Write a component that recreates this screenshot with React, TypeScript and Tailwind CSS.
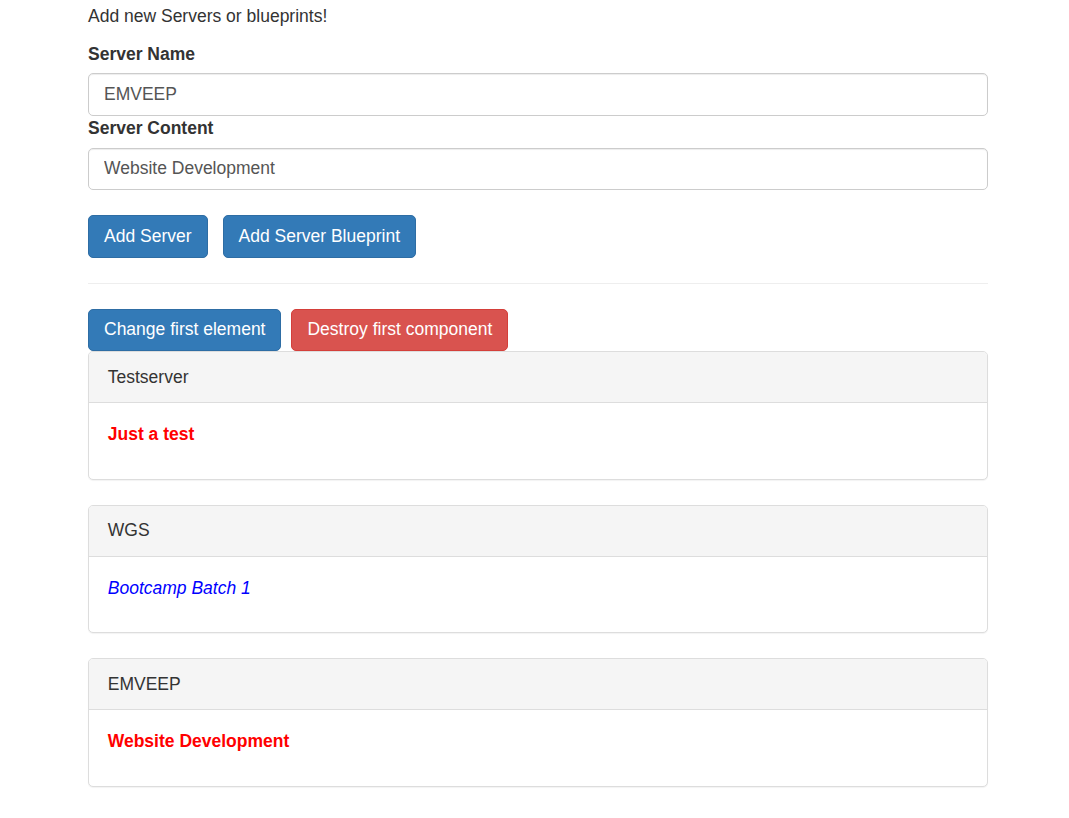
import React from 'react';

type Server = { name: string; content: string; kind: 'server' | 'blueprint' };

const servers: Server[] = [
  { name: 'Testserver', content: 'Just a test', kind: 'server' },
  { name: 'WGS', content: 'Bootcamp Batch 1', kind: 'blueprint' },
  { name: 'EMVEEP', content: 'Website Development', kind: 'server' },
];

const btnBase =
  'inline-block h-[42.5px] px-[15px] rounded-[5px] border text-[17.5px] leading-[25px] text-white';

const inputCls =
  'block w-full h-[42.5px] px-[15px] rounded-[5px] border border-[#ccc] text-[#555] shadow-[inset_0_1px_1px_rgba(0,0,0,0.075)] outline-none';

const ServerPanel: React.FC<{ server: Server }> = ({ server }) => (
  <div className="mb-[25px] rounded-[5px] border border-[#ddd] bg-white shadow-[0_1px_1px_rgba(0,0,0,0.05)]">
    <div className="px-[18.75px] py-[12.5px] bg-[#f5f5f5] border-b border-[#ddd] rounded-t-[4px] text-[#333]">
      {server.name}
    </div>
    <div className="px-[18.75px] py-[19px]">
      {server.kind === 'server' ? (
        <p className="mb-[12.5px] font-bold text-[#ff0000]">{server.content}</p>
      ) : (
        <p className="mb-[12.5px] italic text-[#0000ff]">{server.content}</p>
      )}
    </div>
  </div>
);

export default function App() {
  return (
    <div
      className="min-h-[818px] bg-white text-[#333] text-[17.5px] leading-[25px] pt-[4px]"
      style={{ fontFamily: '"Liberation Sans", Arial, Helvetica, sans-serif' }}
    >
      <div className="ml-[88px] w-[900px]">
        <p className="mb-[12.5px]">Add new Servers or blueprints!</p>

        <label className="block font-bold mb-[6.75px]">Server Name</label>
        <input className={inputCls} defaultValue="EMVEEP" />
        <label className="block font-bold mb-[6.75px]">Server Content</label>
        <input className={inputCls} defaultValue="Website Development" />

        <div className="flex gap-[15px] mt-[25px]">
          <button className={`${btnBase} bg-[#337ab7] border-[#2e6da4]`}>Add Server</button>
          <button className={`${btnBase} bg-[#337ab7] border-[#2e6da4]`}>Add Server Blueprint</button>
        </div>

        <hr className="my-[25px] border-0 border-t border-[#eee]" />

        <div className="flex gap-[10px]">
          <button className={`${btnBase} bg-[#337ab7] border-[#2e6da4]`}>Change first element</button>
          <button className={`${btnBase} bg-[#d9534f] border-[#d43f3a]`}>Destroy first component</button>
        </div>

        {servers.map((s) => (
          <ServerPanel key={s.name} server={s} />
        ))}
      </div>
    </div>
  );
}
